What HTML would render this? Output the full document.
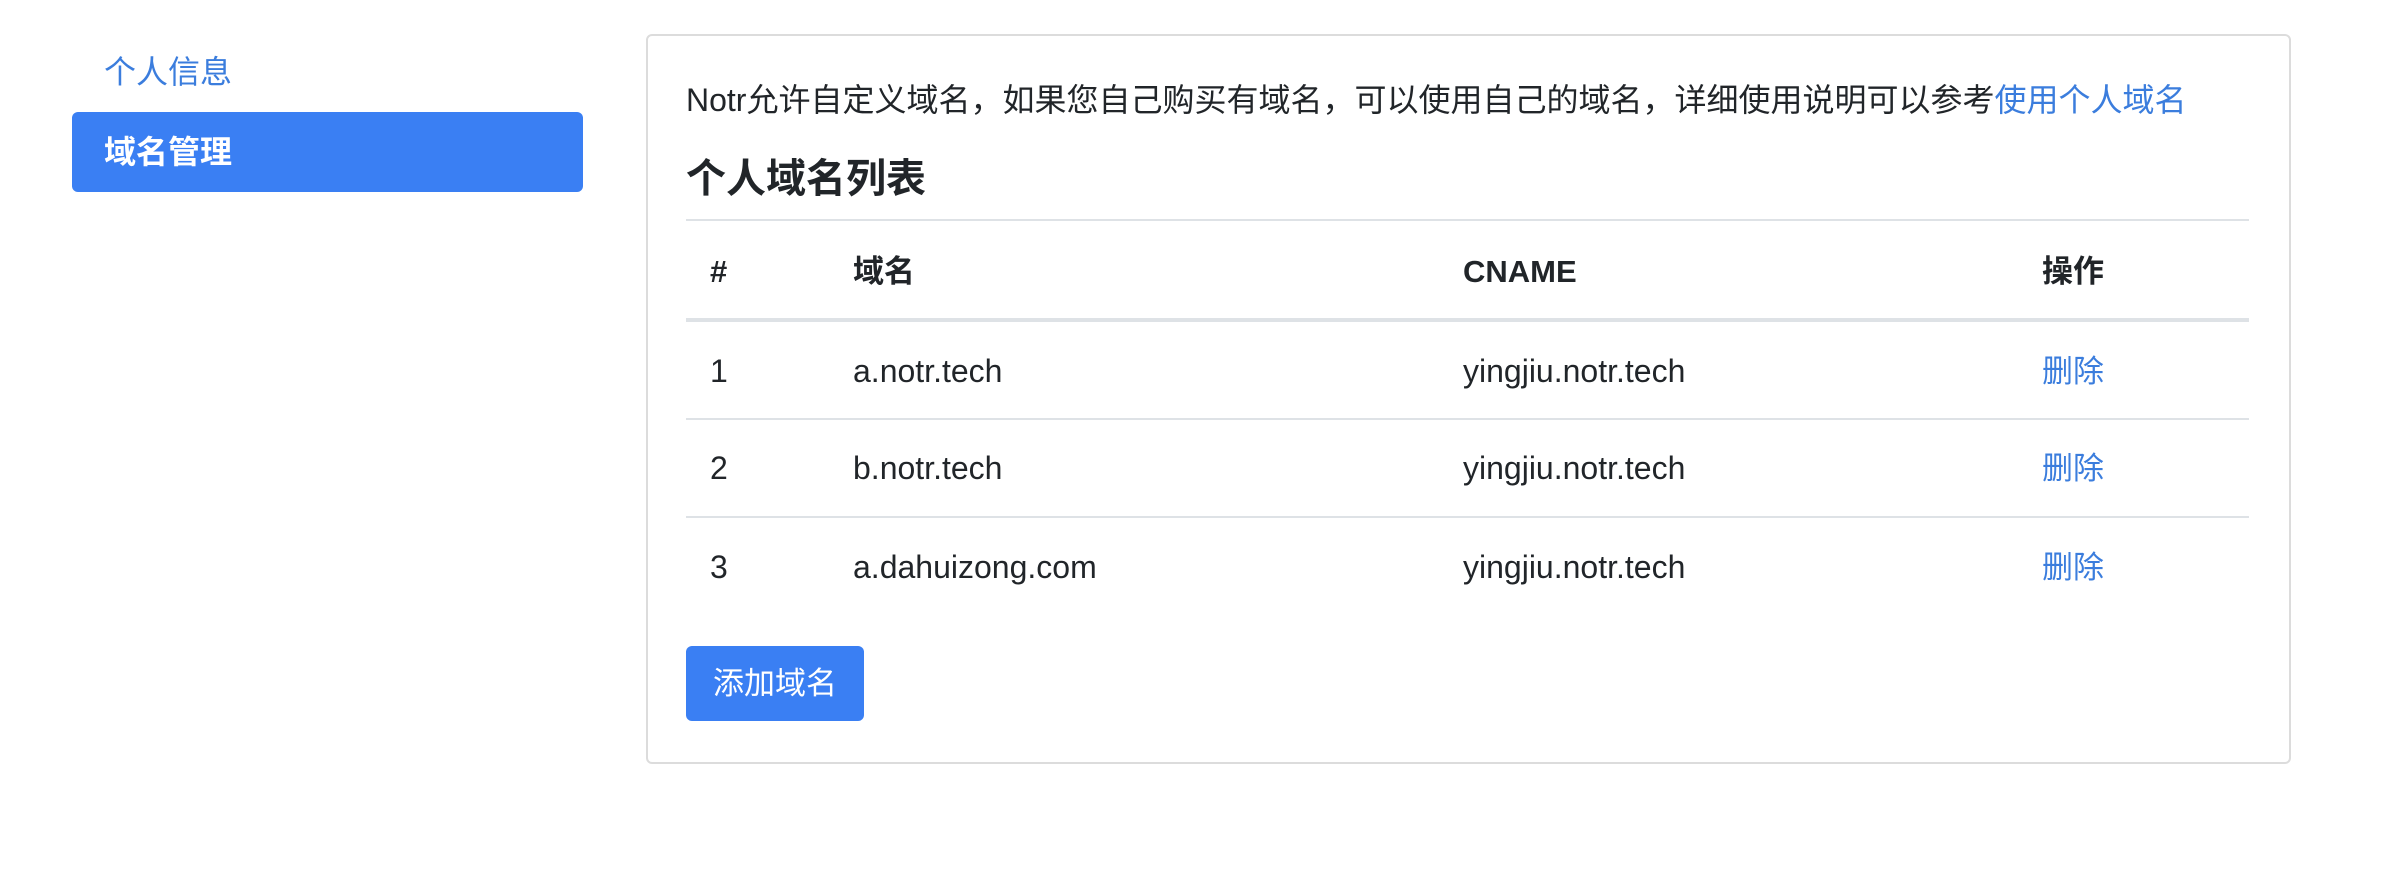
<!DOCTYPE html>
<html><head><meta charset="utf-8"><style>
*{margin:0;padding:0;box-sizing:border-box}
body{width:2402px;height:878px;background:#fff;font-family:"Liberation Sans","Noto Sans CJK SC",sans-serif;color:#212529;position:relative;overflow:hidden}
.a{position:absolute;white-space:nowrap;line-height:1}
.nav1{left:104px;top:56px;font-size:32px;color:#3b7ddd}
.act{left:72px;top:112px;width:511px;height:80px;background:#3a7ff3;border-radius:6px}
.nav2{left:104px;top:136px;font-size:32px;color:#fff;font-weight:bold}
.card{position:absolute;left:646px;top:34px;width:1645px;height:730px;border:2px solid #dcdcdc;border-radius:6px}
.p{left:686px;top:84px;font-size:32px}
.p span{color:#3b7ddd}
.h{left:686px;top:159px;font-size:40px;font-weight:bold}
.line{position:absolute;left:686px;width:1563px;background:#dee2e6}
.th{font-size:31px;font-weight:bold}
.td{font-size:32px}
.del{color:#3b7ddd;font-size:31px}
.btn{left:686px;top:646px;width:178px;height:75px;background:#3a7ff3;border-radius:6px;color:#fff;font-size:31px;line-height:75px;text-align:center}
</style></head><body>
<div class="a nav1">个人信息</div>
<div class="a act"></div>
<div class="a nav2">域名管理</div>
<div class="card"></div>
<div class="a p">Notr允许自定义域名，如果您自己购买有域名，可以使用自己的域名，详细使用说明可以参考<span>使用个人域名</span></div>
<div class="a h">个人域名列表</div>
<div class="line" style="top:219px;height:2px"></div>
<div class="a th" style="left:710px;top:256px">#</div>
<div class="a th" style="left:853px;top:256px">域名</div>
<div class="a th" style="left:1463px;top:256px">CNAME</div>
<div class="a th" style="left:2042px;top:256px">操作</div>
<div class="line" style="top:318px;height:4px"></div>
<div class="a td" style="left:710px;top:355px">1</div>
<div class="a td" style="left:853px;top:355px">a.notr.tech</div>
<div class="a td" style="left:1463px;top:355px">yingjiu.notr.tech</div>
<div class="a del" style="left:2042px;top:356px">删除</div>
<div class="line" style="top:418px;height:2px"></div>
<div class="a td" style="left:710px;top:452px">2</div>
<div class="a td" style="left:853px;top:452px">b.notr.tech</div>
<div class="a td" style="left:1463px;top:452px">yingjiu.notr.tech</div>
<div class="a del" style="left:2042px;top:453px">删除</div>
<div class="line" style="top:516px;height:2px"></div>
<div class="a td" style="left:710px;top:551px">3</div>
<div class="a td" style="left:853px;top:551px">a.dahuizong.com</div>
<div class="a td" style="left:1463px;top:551px">yingjiu.notr.tech</div>
<div class="a del" style="left:2042px;top:552px">删除</div>
<div class="a btn">添加域名</div>
</body></html>
